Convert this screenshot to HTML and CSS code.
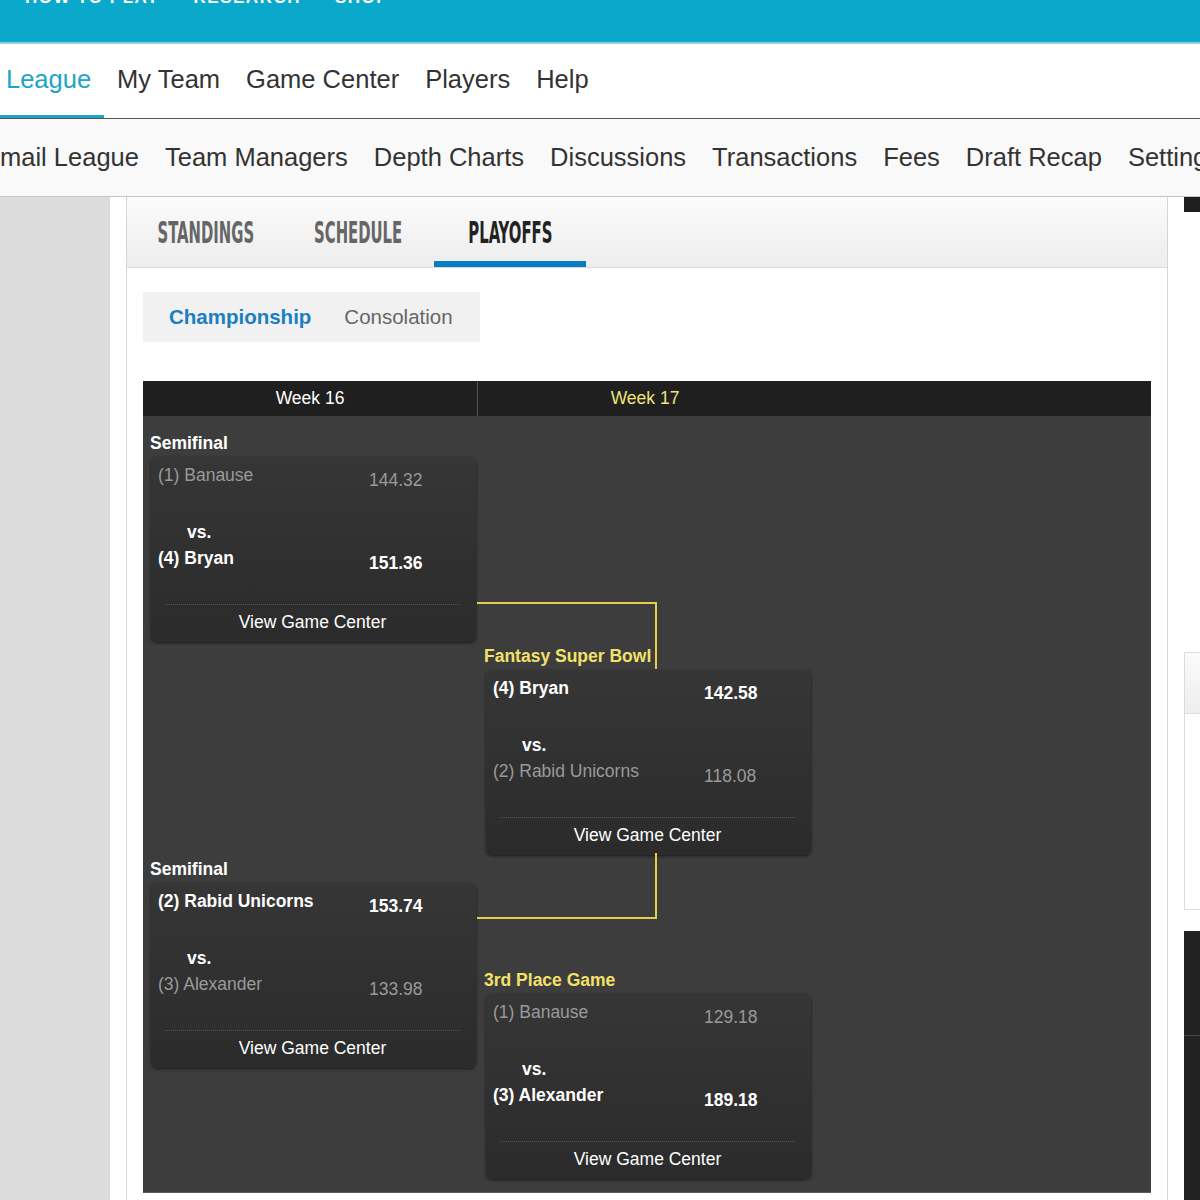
FILE: index.html
```html
<!DOCTYPE html>
<html lang="en">
<head>
    <meta charset="UTF-8">
    <meta name="viewport" content="width=device-width, initial-scale=1.0">
    <title>League Playoffs</title>
    <link rel="stylesheet" href="styles.css">
</head>
<body>
    <div class="page">
        <header class="topbar">
            <div class="topbar-links">
                <span>HOW TO PLAY</span>
                <span>RESEARCH</span>
                <span>SHOP</span>
            </div>
        </header>

        <nav class="mainnav">
            <a class="active">League</a>
            <a>My Team</a>
            <a>Game Center</a>
            <a>Players</a>
            <a>Help</a>
        </nav>

        <nav class="subnav">
            <a>Email League</a>
            <a>Team Managers</a>
            <a>Depth Charts</a>
            <a>Discussions</a>
            <a>Transactions</a>
            <a>Fees</a>
            <a>Draft Recap</a>
            <a>Settings</a>
        </nav>

        <div class="content">
            <aside class="leftrail"></aside>

            <main class="panel">
                <div class="tabs">
                    <a class="tab"><span>STANDINGS</span></a>
                    <a class="tab"><span>SCHEDULE</span></a>
                    <a class="tab active"><span>PLAYOFFS</span></a>
                </div>

                <div class="panel-body">
                    <div class="toggle">
                        <span class="on">Championship</span>
                        <span>Consolation</span>
                    </div>

                    <div class="bracket">
                        <div class="bracket-head">
                            <div class="week">Week 16</div>
                            <div class="week current">Week 17</div>
                        </div>

                        <div class="bracket-body">
                            <div class="round first">
                                <div class="game">
                                    <div class="game-title">Semifinal</div>
                                    <div class="match">
                                        <div class="team lost"><span class="name">(1) Banause</span><span class="pts">144.32</span></div>
                                        <div class="vs">vs.</div>
                                        <div class="team won"><span class="name">(4) Bryan</span><span class="pts">151.36</span></div>
                                        <div class="gc">View Game Center</div>
                                    </div>
                                </div>
                                <div class="game second-semi">
                                    <div class="game-title">Semifinal</div>
                                    <div class="match">
                                        <div class="team won"><span class="name">(2) Rabid Unicorns</span><span class="pts">153.74</span></div>
                                        <div class="vs">vs.</div>
                                        <div class="team lost"><span class="name">(3) Alexander</span><span class="pts">133.98</span></div>
                                        <div class="gc">View Game Center</div>
                                    </div>
                                </div>
                            </div>

                            <div class="round final">
                                <div class="game">
                                    <div class="game-title gold">Fantasy Super Bowl</div>
                                    <div class="match">
                                        <div class="team won"><span class="name">(4) Bryan</span><span class="pts">142.58</span></div>
                                        <div class="vs">vs.</div>
                                        <div class="team lost"><span class="name">(2) Rabid Unicorns</span><span class="pts">118.08</span></div>
                                        <div class="gc">View Game Center</div>
                                    </div>
                                </div>
                                <div class="game third-place">
                                    <div class="game-title gold">3rd Place Game</div>
                                    <div class="match">
                                        <div class="team lost"><span class="name">(1) Banause</span><span class="pts">129.18</span></div>
                                        <div class="vs">vs.</div>
                                        <div class="team won"><span class="name">(3) Alexander</span><span class="pts">189.18</span></div>
                                        <div class="gc">View Game Center</div>
                                    </div>
                                </div>
                            </div>

                            <div class="link link-top"></div>
                            <div class="link link-bottom"></div>
                        </div>
                    </div>
                </div>
            </main>

            <aside class="rightrail">
                <div class="rail-bar"></div>
                <div class="rail-box"><div class="rail-box-head"></div></div>
                <div class="rail-dark"><div class="rail-dark-head"></div></div>
            </aside>
        </div>
    </div>
</body>
</html>
```

FILE: styles.css
```css
body {
    margin: 0;
    font-family: "Liberation Sans", Arial, sans-serif;
    background-color: #fff;
    color: #333;
}
.page {
    width: 1200px;
    height: 1200px;
    overflow: hidden;
}
a {
    cursor: pointer;
}

/* top blue strip */
.topbar {
    height: 42px;
    background-color: #0aa9cb;
    border-bottom: 2px solid #8fd2e4;
    overflow: hidden;
}
.topbar-links {
    margin-top: -12px;
    padding-left: 25px;
    display: flex;
    gap: 34px;
    font-size: 17px;
    line-height: 20px;
    font-weight: bold;
    letter-spacing: 1.5px;
    color: #fff;
}

/* main nav */
.mainnav {
    display: flex;
    height: 74px;
    margin-left: -7px;
    border-bottom: 1px solid #555;
    background-color: #fff;
}
.mainnav a {
    display: flex;
    align-items: center;
    padding: 0 13px;
    font-size: 25.5px;
    color: #333;
    border-bottom: 3px solid transparent;
}
.mainnav a.active {
    color: #1ba5c7;
    border-bottom-color: #1ba5c7;
}

/* secondary nav */
.subnav {
    display: flex;
    gap: 26px;
    height: 77px;
    align-items: center;
    margin-left: -17px;
    background-color: #f9f9f9;
    border-bottom: 1px solid #c4c4c4;
    white-space: nowrap;
}
.subnav a {
    font-size: 25.5px;
    color: #333;
}

/* body columns */
.content {
    display: flex;
    gap: 16px;
    height: 1003px;
}
.leftrail {
    width: 110px;
    flex: none;
    background-color: #dcdcdc;
}
.panel {
    width: 1040px;
    flex: none;
    border-left: 1px solid #d6d6d6;
    border-right: 1px solid #d6d6d6;
}
.rightrail {
    flex: none;
    width: 40px;
}

/* panel tabs */
.tabs {
    display: flex;
    padding-left: 3px;
    height: 71px;
    background: linear-gradient(#fbfbfb, #ededed);
    border-bottom: 1px solid #dadada;
    box-sizing: border-box;
}
.tab {
    width: 152px;
    display: flex;
    justify-content: center;
    align-items: center;
    padding-top: 7px;
    border-bottom: 6px solid transparent;
    box-sizing: border-box;
}
.tab span {
    display: inline-block;
    font-family: "DejaVu Sans Condensed", "DejaVu Sans", sans-serif;
    font-weight: bold;
    font-size: 30px;
    color: #666;
    transform: scaleX(0.55);
}
.tab.active {
    border-bottom-color: #0a7cc4;
}
.tab.active span {
    color: #222;
}

.panel-body {
    padding: 24px 16px 0 16px;
}

/* championship / consolation switch */
.toggle {
    display: inline-flex;
    align-items: center;
    gap: 33px;
    height: 50px;
    padding: 0 27px 0 26px;
    background-color: #f1f1f1;
    font-size: 20.5px;
    color: #666;
}
.toggle .on {
    color: #1a7fc0;
    font-weight: bold;
}

/* bracket */
.bracket {
    margin-top: 39px;
    font-size: 17.5px;
}
.bracket-head {
    display: flex;
    height: 35px;
    background-color: #1f1f1f;
}
.week {
    width: 334px;
    display: flex;
    align-items: center;
    justify-content: center;
    color: #fff;
    border-right: 1px solid #555;
}
.week.current {
    color: #f1e27a;
    border-right: none;
}
.bracket-body {
    position: relative;
    display: flex;
    height: 777px;
    background-color: #3d3d3d;
    border-bottom: 1px solid #5a5a5a;
    box-sizing: border-box;
}
.round {
    width: 335px;
    flex: none;
}
.round.first {
    padding-top: 17px;
}
.round.final {
    padding-top: 230px;
}
.second-semi {
    margin-top: 217px;
}
.third-place {
    margin-top: 115px;
}
.game-title {
    padding-left: 7px;
    line-height: 20px;
    font-weight: bold;
    color: #fff;
    margin-bottom: 4px;
}
.round.final .game-title {
    padding-left: 6px;
}
.game-title.gold {
    color: #f3e16a;
}
.match {
    margin-left: 8px;
    width: 325px;
    height: 185px;
    box-sizing: border-box;
    padding-top: 8px;
    border-radius: 6px;
    background: linear-gradient(#363636, #2b2b2b);
    box-shadow: 0 1px 3px rgba(0, 0, 0, 0.6);
}
.team {
    display: flex;
    line-height: 20px;
    padding-left: 7px;
}
.team .name {
    width: 211px;
}
.team .pts {
    margin-top: 5px;
}
.team.lost {
    color: #9a9a9a;
}
.team.won {
    color: #fff;
    font-weight: bold;
}
.vs {
    margin: 32px 0 6px 36px;
    line-height: 20px;
    font-weight: bold;
    color: #fff;
}
.gc {
    margin: 31px 16px 0 14px;
    padding-top: 7px;
    border-top: 1px dotted #555;
    line-height: 20px;
    text-align: center;
    color: #fff;
}

/* yellow bracket connectors */
.link {
    position: absolute;
    left: 334px;
    width: 178px;
    border: 0 solid #e3cf4a;
}
.link-top {
    top: 186px;
    height: 65px;
    border-top-width: 2px;
    border-right-width: 2px;
}
.link-bottom {
    top: 437px;
    height: 64px;
    border-bottom-width: 2px;
    border-right-width: 2px;
}

/* right rail fragments */
.rail-bar {
    height: 15px;
    background-color: #1e1e1e;
}
.rail-box {
    margin-top: 440px;
    height: 258px;
    border: 1px solid #dcdcdc;
    box-sizing: border-box;
}
.rail-box-head {
    height: 60px;
    background: linear-gradient(#fbfbfb, #eeeeee);
    border-bottom: 1px solid #dcdcdc;
}
.rail-dark {
    margin-top: 21px;
    height: 280px;
    background-color: #222;
}
.rail-dark-head {
    height: 104px;
    border-bottom: 1px solid #4a4a4a;
}
```
